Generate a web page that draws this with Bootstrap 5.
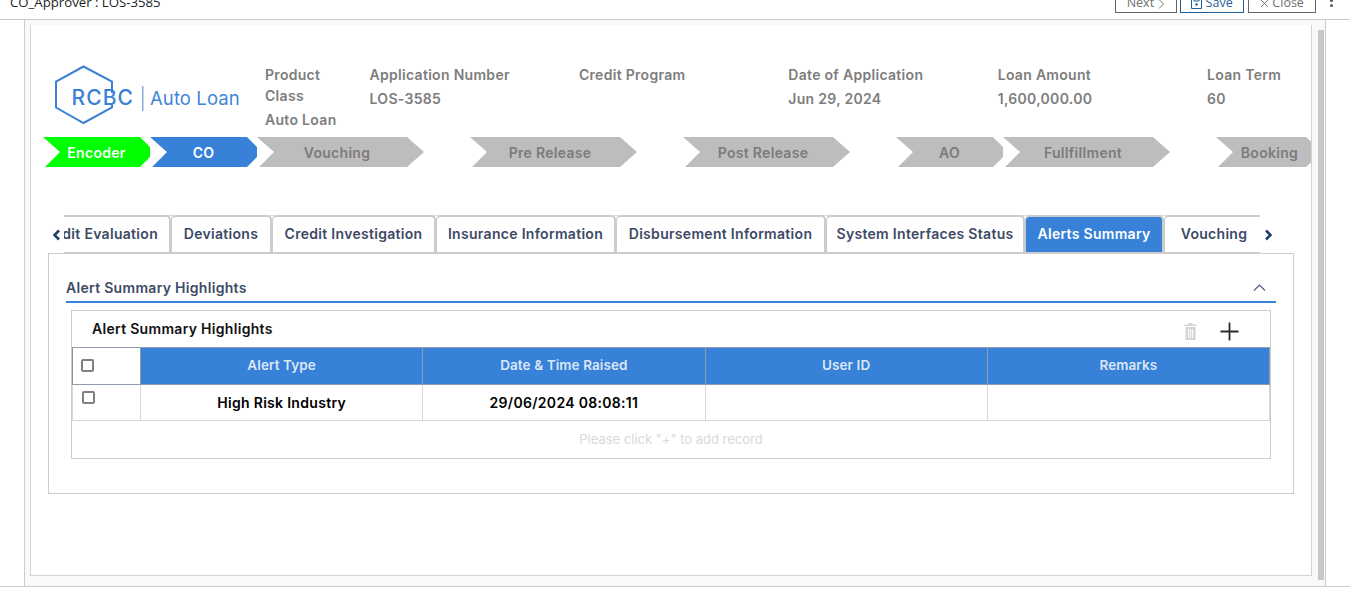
<!DOCTYPE html>
<html lang="en">
<head>
  <meta charset="UTF-8" />
  <title>CO_Approver : LOS-3585</title>
  <link href="https://cdn.jsdelivr.net/npm/bootstrap@5.3.2/dist/css/bootstrap.min.css" rel="stylesheet"/>
  <style>
    html, body { height: 602px; overflow: hidden; }
    body { background: #fff; font-family: Inter, "Liberation Sans", sans-serif; font-size: 14px; letter-spacing: .3px; }

    .top-bar { height: 20px; border-bottom: 1px solid #ccc; overflow: hidden; padding: 0 0 6px 10px; letter-spacing: 0; }
    .top-title { font-family: "Open Sans", sans-serif; font-size: 13.2px; line-height: 17px; color: #222; margin-bottom: 2px; }
    .top-btn { height: 24px; border: 1px solid #666; background: #fff; color: #6f6f6f; font-family: "Open Sans", sans-serif; font-size: 12.5px; line-height: 20px; padding-top: 3px; text-align: center; white-space: nowrap; }
    .top-btn.next { width: 62px; }
    .top-btn.save { width: 64px; margin-left: 3px; border-color: #1f5f99; color: #1f5f99; }
    .top-btn.closer { width: 68px; margin-left: 4px; }
    .dots { width: 34px; padding-right: 4px; margin-bottom: 6px; }
    .dots i { display: block; width: 3px; height: 3px; margin: 2px auto 0; background: #555; border-radius: 50%; }

    .frame-wrap { border-bottom: 1px solid #ccc; }
    .outer-frame { height: 566px; margin-left: 24px; width: 1302px; background: #f8f9fb; border-left: 1px solid #ccc; border-right: 1px solid #ccc; padding: 5px 0 0 5px; }
    .inner-card { width: 1282px; height: 551px; background: #fff; border: 1px solid #d2d4d8; border-top: 0; overflow: hidden; }
    .fake-scroll { width: 6px; height: 550px; margin: 5px 0 0 6px; background: #c8c8c8; }

    .info-row { height: 72px; padding-top: 40px; box-sizing: content-box; }
    .logo-box { width: 234px; flex: none; height: 72px; }
    .logo-main { font-family: Inter, sans-serif; font-weight: 500; font-size: 21px; letter-spacing: 1.1px; fill: #3a80d6; }
    .logo-sub { font-family: Inter, sans-serif; font-weight: 400; font-size: 18.5px; letter-spacing: .1px; fill: #3f86d9; }
    .info-col { width: 209.4px; flex: none; margin-top: -1px; color: #7d7d7d; font-weight: 600; font-size: 14px; line-height: 21px; }
    .info-col.narrow { width: 104.5px; padding-right: 30px; }
    .info-col .val { margin-top: 3px; white-space: nowrap; }

    .steps { height: 30px; margin-left: 12px; width: 1400px; }
    .step { height: 30px; flex: none; line-height: 32px; text-align: center; font-weight: 600; font-size: 14px; background: #bdbdbd; color: #7b7b7b; }
    .step-s { width: 107px; clip-path: polygon(0 0, 90px 0, 107px 50%, 90px 100%, 2px 100%, 17px 50%); }
    .step-trim { clip-path: polygon(0 0, 97px 0, 107px 33%, 107px 67%, 97px 100%, 2px 100%, 17px 50%); }
    .step-l { width: 167px; padding-right: 7px; clip-path: polygon(0 0, 150px 0, 167px 50%, 150px 100%, 2px 100%, 17px 50%); }
    .step-gap { margin-left: 46px; }
    .step-done { background: #00ff00; color: #fff; }
    .step-now { background: #3781d9; color: #fff; }

    .tab-strip { margin: 48px 0 0 17px; width: 1246px; height: 39px; position: relative; z-index: 1; }
    .tab-arrow { width: 16px; flex: none; text-align: center; padding-top: 14px; }
    .tab-arrow svg { display: block; margin: 0 auto; }
    .tab-row { display: grid; grid-template-columns: 107px 101px 164px 180px 210px 199px 139px 96px; width: 1196px; border-bottom: 2px solid #ccc; border-top: 1px solid #ddd; }
    .tab-item { height: 37px; line-height: 33px; margin-top: -1px; border: 2px solid #ccc; border-bottom: 0; border-left-width: 1px; border-radius: 5px 5px 0 0; text-align: center; color: #3d4a66; font-weight: 600; font-size: 14px; white-space: nowrap; overflow: hidden; }
    .tab-item.first { border-left: 0; border-radius: 0 5px 0 0; display: flex; justify-content: flex-end; padding-right: 11px; }
    .tab-item.last { border-right: 0; border-radius: 5px 0 0 0; padding-left: 3px; }
    .tab-item.active { background: #3781d9; color: #fff; }

    .tab-panel { margin-left: 17px; width: 1246px; height: 241px; border: 1px solid #ccc; padding: 0 17px; margin-top: -1px; }
    .section-head { height: 49px; padding-top: 23px; border-bottom: 2px solid #3781d9; color: #3d4a66; font-weight: 600; font-size: 14px; line-height: 21px; }
    .section-head svg { margin-right: 10px; }
    .grid-box { margin: 7px 5px 0; height: 149px; border: 1px solid #ccc; }
    .grid-title { height: 36px; padding-left: 20px; font-weight: 600; font-size: 14px; line-height: 36px; color: #111; }
    .grid-title svg { flex: none; margin-top: 4px; }
    .trash-icon { margin-right: 23px; }
    .plus-icon { margin-right: 31px; }
    .alert-grid { table-layout: fixed; margin: 0; width: 1198px; }
    .alert-grid th, .alert-grid td { text-align: center; vertical-align: middle; padding: 0; font-weight: 600; font-size: 14px; }
    .alert-grid th { height: 37px; padding-bottom: 2px; background: #3781d9; color: #dce7f5; font-size: 13.5px; letter-spacing: .1px; border: 1px solid #8f9cab; border-width: 1px 1px 1px 0; box-shadow: none; }
    .alert-grid td { height: 36px; color: #000; border: 1px solid #d8d8d8; border-width: 0 1px 1px 0; }
    .alert-grid .chk-col { width: 68px; text-align: left; background: #fff; border-left: 1px solid #8f8f8f; padding-left: 8px; }
    .alert-grid td.chk-col { border-left-color: #d8d8d8; vertical-align: top; padding: 6px 0 0 9px; }
    .tick-box { display: block; width: 13px; height: 13px; border: 2px solid #808080; border-radius: 2px; background: #fff; }
    .empty-note { height: 37px; line-height: 36px; text-align: center; color: #d9d9d9; font-weight: 400; font-size: 13px; letter-spacing: 0; }
  </style>
</head>
<body>

<div class="top-bar d-flex align-items-end">
  <div class="top-title flex-grow-1">CO_Approver : LOS-3585</div>
  <div class="top-btn next">Next
    <svg width="8" height="10" viewBox="0 0 8 10"><path d="M2 0.5 6.5 5 2 9.5" fill="none" stroke="#777"/></svg>
  </div>
  <div class="top-btn save">
    <svg width="11" height="11" viewBox="0 0 11 11"><path d="M.5.5h10v10H.5zM3 .5v2.500h5V.5" fill="none" stroke="#1f5f99"/><circle cx="5.500" cy="6.500" r="1.200" fill="#1f5f99"/></svg>
    Save
  </div>
  <div class="top-btn closer">
    <svg width="9" height="9" viewBox="0 0 9 9"><path d="M1 1l7 7M8 1l-7 7" stroke="#777"/></svg>
    Close
  </div>
  <div class="dots"><i></i><i></i></div>
</div>

<div class="frame-wrap">
<div class="outer-frame d-flex">
  <div class="inner-card">
    <div class="info-row d-flex">
      <div class="logo-box">
        <svg width="234" height="72" viewBox="0 0 234 72">
          <path d="M81 28V16.500L52.500 1.500 25 16.500V42.500L52.500 58 81 42.500V40" fill="none" stroke="#3a80d6" stroke-width="2"/>
          <text class="logo-main" x="40.500" y="40">RCBC</text>
          <rect x="111" y="21" width="1.500" height="25" fill="#7fb0e6"/>
          <text class="logo-sub" x="119" y="40">Auto Loan</text>
        </svg>
      </div>
      <div class="info-col narrow">Product Class<div class="val">Auto Loan</div></div>
      <div class="info-col">Application Number<div class="val">LOS-3585</div></div>
      <div class="info-col">Credit Program</div>
      <div class="info-col">Date of Application<div class="val">Jun 29, 2024</div></div>
      <div class="info-col">Loan Amount<div class="val">1,600,000.00</div></div>
      <div class="info-col">Loan Term<div class="val">60</div></div>
    </div>

    <div class="steps d-flex">
      <div class="step step-s step-trim step-done">Encoder</div>
      <div class="step step-s step-trim step-now">CO</div>
      <div class="step step-l">Vouching</div>
      <div class="step step-l step-gap">Pre Release</div>
      <div class="step step-l step-gap">Post Release</div>
      <div class="step step-s step-trim step-gap">AO</div>
      <div class="step step-l">Fullfillment</div>
      <div class="step step-s step-gap">Booking</div>
    </div>

    <div class="tab-strip d-flex">
      <div class="tab-arrow">
        <svg width="9" height="12" viewBox="0 0 9 12"><path d="M7 1.500 2.500 6 7 10.500" fill="none" stroke="#1f3f66" stroke-width="2.500"/></svg>
      </div>
      <div class="tab-row">
        <div class="tab-item first"><span>Credit Evaluation</span></div>
        <div class="tab-item">Deviations</div>
        <div class="tab-item">Credit Investigation</div>
        <div class="tab-item">Insurance Information</div>
        <div class="tab-item">Disbursement Information</div>
        <div class="tab-item">System Interfaces Status</div>
        <div class="tab-item active">Alerts Summary</div>
        <div class="tab-item last">Vouching</div>
      </div>
      <div class="tab-arrow">
        <svg width="9" height="12" viewBox="0 0 9 12"><path d="M2 1.500 6.500 6 2 10.500" fill="none" stroke="#1f3f66" stroke-width="2.500"/></svg>
      </div>
    </div>

    <div class="tab-panel">
      <div class="section-head d-flex justify-content-between align-items-start">
        <span>Alert Summary Highlights</span>
        <svg width="13" height="21" viewBox="0 0 13 21"><path d="M1 13.500 6.500 8 12 13.500" fill="none" stroke="#4a5a78" stroke-width="1.100"/></svg>
      </div>
      <div class="grid-box">
        <div class="grid-title d-flex align-items-center">
          <span class="flex-grow-1">Alert Summary Highlights</span>
          <svg class="trash-icon" width="13" height="19" viewBox="0 0 13 19"><path d="M4.500 1h4v1.500h4V4H.5V2.500h4zM1.500 5h10v13h-10z" fill="#d4d4d4"/><path d="M4.500 7v9M6.500 7v9M8.500 7v9" stroke="#fff"/></svg>
          <svg class="plus-icon" width="19" height="19" viewBox="0 0 19 19"><path d="M9.500 0.500v18M0.500 9.500h18" stroke="#2b2b2b" stroke-width="1.800"/></svg>
        </div>
        <table class="table alert-grid">
          <thead>
            <tr>
              <th class="chk-col"><span class="tick-box"></span></th>
              <th>Alert Type</th>
              <th>Date &amp; Time Raised</th>
              <th>User ID</th>
              <th>Remarks</th>
            </tr>
          </thead>
          <tbody>
            <tr>
              <td class="chk-col"><span class="tick-box"></span></td>
              <td>High Risk Industry</td>
              <td>29/06/2024 08:08:11</td>
              <td></td>
              <td></td>
            </tr>
          </tbody>
        </table>
        <div class="empty-note">Please click "+" to add record</div>
      </div>
    </div>
  </div>
  <div class="fake-scroll"></div>
</div>
</div>

<script src="https://cdn.jsdelivr.net/npm/bootstrap@5.3.2/dist/js/bootstrap.bundle.min.js"></script>
</body>
</html>
